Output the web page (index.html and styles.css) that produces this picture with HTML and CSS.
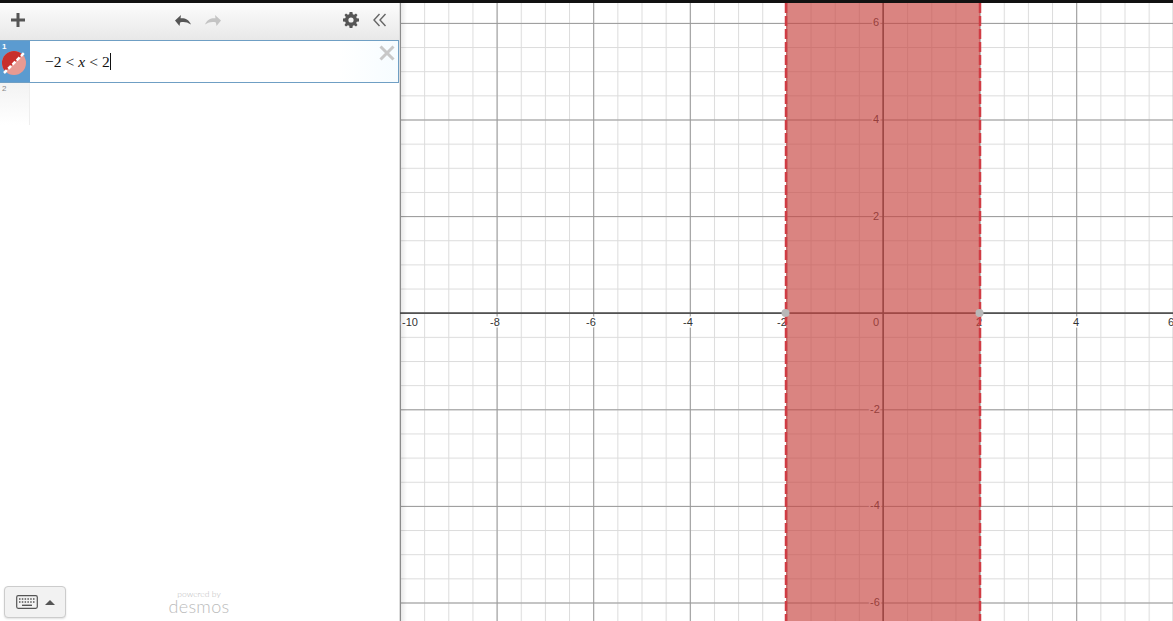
FILE: index.html
```html
<!DOCTYPE html>
<html>
<head>
  <meta charset="UTF-8">
  <title>Desmos graph</title>
  <link rel="stylesheet" href="styles.css">
</head>
<body>
<div class="topline"></div>
<div class="calc">

  <div class="sidebar">
    <div class="header">
      <button class="tool">
        <svg width="16" height="16" viewBox="0 0 16 16"><path d="M6.5 1h3v5.5H15v3H9.500V15h-3V9.500H1v-3h5.500z" fill="#555"/></svg>
      </button>
      <div class="history">
        <svg width="18" height="13" viewBox="0 0 18 13"><path d="M7 1 1 6.500 5.500 12l.6-3.600C9.500 7.500 13 7.800 17 10.500 15 5.500 11 3.800 6.500 4.200z" fill="#555"/></svg>
        <svg width="18" height="13" viewBox="0 0 18 13"><path d="M11 1l6 5.500L12.500 12l-.6-3.600C8.500 7.500 5 7.800 1 10.500 3 5.500 7 3.800 11.500 4.200z" fill="#c4c4c4"/></svg>
      </div>
      <div class="settings">
        <svg width="16" height="16" viewBox="0 0 16 16"><path d="M6.600 0h2.800l.4 2.200 1.300.6L13 1.500l1.500 1.500-1.300 1.900.6 1.300 2.200.4v2.800l-2.200.4-.6 1.300 1.300 1.900-1.500 1.500-1.900-1.300-1.300.6-.4 2.200H6.600l-.4-2.200-1.300-.6L3 14.500 1.500 13l1.300-1.900-.6-1.300L0 9.400V6.600l2.200-.4.600-1.300L1.500 3 3 1.500l1.900 1.300 1.300-.6zM8 5.400a2.600 2.600 0 1 0 0 5.200 2.600 2.600 0 0 0 0-5.200z" fill="#555" fill-rule="evenodd"/></svg>
        <svg width="14" height="14" viewBox="0 0 14 14"><path d="M6.500 1 1 7l5.500 6M12.500 1 7 7l5.500 6" fill="none" stroke="#666" stroke-width="1.400"/></svg>
      </div>
    </div>

    <div class="expr expr-active">
      <div class="expr-tab">
        <span class="expr-num">1</span>
        <svg class="expr-icon" width="26" height="26" viewBox="0 0 26 26">
          <circle cx="13" cy="13" r="12" fill="#e89a92"/>
          <path d="M21.500 4.500A12 12 0 0 0 4.500 21.500z" fill="#c8302c"/>
          <path d="M3 23 23 3" stroke="#fff" stroke-width="2.500" stroke-dasharray="4 2"/>
        </svg>
      </div>
      <div class="math">
        <span>−2</span><span class="rel">&lt;</span><i>x</i><span class="rel">&lt;</span><span>2</span><span class="cursor"></span>
      </div>
      <svg class="expr-close" width="16" height="16" viewBox="0 0 16 16"><path d="M1.500 1.500l13 13M14.500 1.500l-13 13" stroke="#c8c8c8" stroke-width="3"/></svg>
    </div>

    <div class="expr">
      <div class="expr-tab expr-tab-empty"><span class="expr-num">2</span></div>
    </div>

    <div class="footer">
      <button class="keys">
        <svg width="22" height="14" viewBox="0 0 22 14">
          <rect x=".7" y=".7" width="20.600" height="12.600" rx="1.500" fill="none" stroke="#555" stroke-width="1.200"/>
          <path d="M3 4h16M3 7h16" stroke="#555" stroke-width="1.400" stroke-dasharray="1.500 1.300"/>
          <path d="M6 10.300h10" stroke="#555" stroke-width="1.400"/>
        </svg>
        <span class="caret"></span>
      </button>
      <div class="brand">
        <span class="brand-by">powered by</span>
        <span class="brand-name">desmos</span>
      </div>
    </div>
  </div>

  <div class="graph">
    <svg class="plane" width="773" height="618" viewBox="400 3 773 618">
      <defs>
        <pattern id="minor-x" patternUnits="userSpaceOnUse" x="883" y="0" width="24.150" height="10">
          <rect width="1" height="10" fill="#dcdcdc"/>
        </pattern>
        <pattern id="minor-y" patternUnits="userSpaceOnUse" x="0" y="312.700" width="10" height="24.150">
          <rect width="10" height="1" fill="#dcdcdc"/>
        </pattern>
        <pattern id="major-x" patternUnits="userSpaceOnUse" x="883" y="0" width="96.600" height="10">
          <rect width="1" height="10" fill="#999"/>
        </pattern>
        <pattern id="major-y" patternUnits="userSpaceOnUse" x="0" y="312.700" width="10" height="96.600">
          <rect width="10" height="1" fill="#999"/>
        </pattern>
        <linearGradient id="edge-shade">
          <stop offset="0" stop-color="#000" stop-opacity=".1"/>
          <stop offset="1" stop-color="#000" stop-opacity="0"/>
        </linearGradient>
      </defs>

      <rect x="400" y="0" width="773" height="621" fill="#fff"/>
      <rect x="400" y="0" width="773" height="621" fill="url(#minor-x)"/>
      <rect x="400" y="0" width="773" height="621" fill="url(#minor-y)"/>
      <rect x="400" y="0" width="773" height="621" fill="url(#major-x)"/>
      <rect x="400" y="0" width="773" height="621" fill="url(#major-y)"/>
      <rect class="axis" x="400" y="312.300" width="773" height="1.600"/>
      <rect class="axis" x="882.300" y="0" width="1.600" height="621"/>

      <g class="ticks">
        <text x="410" y="326">-10</text>
        <text x="495" y="326">-8</text>
        <text x="591" y="326">-6</text>
        <text x="688" y="326">-4</text>
        <text x="782" y="326">-2</text>
        <text x="876" y="326">0</text>
        <text x="979" y="326">2</text>
        <text x="1076" y="326">4</text>
        <text x="1171" y="326">6</text>
        <text x="876" y="26">6</text>
        <text x="876" y="123">4</text>
        <text x="876" y="220">2</text>
        <text x="875" y="413">-2</text>
        <text x="875" y="509">-4</text>
        <text x="875" y="606">-6</text>
      </g>

      <rect class="region" x="786" y="0" width="194" height="621"/>
      <path class="bound" d="M786 3V621M980 3V621"/>
      <circle class="hole" cx="785.500" cy="313" r="4"/>
      <circle class="hole" cx="979.500" cy="313" r="4"/>
      <rect x="400" y="0" width="7" height="621" fill="url(#edge-shade)"/>
    </svg>
  </div>

</div>
</body>
</html>
```

FILE: styles.css
```css
html, body {
  margin: 0;
  height: 100%;
  overflow: hidden;
  background: #fff;
  font-family: "Liberation Sans", Arial, sans-serif;
}

.topline {
  height: 3px;
  background: #111;
}

.calc {
  display: flex;
  height: 618px;
}

/* left panel */
.sidebar {
  width: 400px;
  flex: none;
  display: flex;
  flex-direction: column;
  box-sizing: border-box;
  border-right: 1px solid #ddd;
}

.header {
  height: 37px;
  flex: none;
  box-sizing: border-box;
  display: grid;
  grid-template-columns: 1fr 1fr 1fr;
  align-items: center;
  padding: 0 12px 3px 10px;
  background: linear-gradient(#fcfcfc, #e8e8e8);
}

.tool {
  padding: 0;
  border: 0;
  background: none;
  display: flex;
}

.history {
  display: flex;
  justify-content: center;
  gap: 12px;
}

.settings {
  display: flex;
  justify-content: flex-end;
  align-items: center;
  gap: 14px;
}

.expr {
  height: 42px;
  flex: none;
  display: flex;
  position: relative;
}

.expr-active {
  height: 43px;
  box-sizing: border-box;
  border: 1px solid #6f9fc4;
  border-left: 0;
  background: linear-gradient(90deg, #fff 85%, #f6fcff);
}

.expr-tab {
  width: 30px;
  flex: none;
  background: #5b9bd0;
  position: relative;
}

.expr-tab-empty {
  background: linear-gradient(#f3f3f3, #fff);
  box-sizing: border-box;
  border-right: 1px solid #eee;
}

.expr-num {
  position: absolute;
  top: 1px;
  left: 2px;
  font-size: 8px;
  color: #888;
}

.expr-active .expr-num {
  color: #fff;
  font-weight: bold;
}

.expr-icon {
  position: absolute;
  left: 1px;
  top: 9px;
}

.math {
  display: flex;
  align-items: center;
  padding-left: 15px;
  font-family: "Liberation Serif", "Times New Roman", serif;
  font-size: 15.500px;
  color: #111;
}

.rel {
  margin: 0 4px;
}

.cursor {
  width: 1px;
  height: 17px;
  background: #111;
}

.expr-close {
  position: absolute;
  right: 3px;
  top: 4px;
}

.footer {
  margin-top: auto;
  display: flex;
  align-items: flex-end;
  padding: 0 0 3px 4px;
}

.keys {
  width: 62px;
  height: 32px;
  padding: 0;
  display: flex;
  align-items: center;
  justify-content: center;
  gap: 7px;
  box-sizing: border-box;
  border: 1px solid #ccc;
  border-radius: 4px;
  background: #f2f2f2;
  box-shadow: 0 1px 2px rgba(0, 0, 0, .12);
}

.caret {
  width: 0;
  height: 0;
  border-left: 5px solid transparent;
  border-right: 5px solid transparent;
  border-bottom: 5px solid #555;
}

.brand {
  margin-left: 102px;
  width: 62px;
  display: flex;
  flex-direction: column;
  align-items: center;
  color: #bbb;
  font-family: Lato, "Open Sans", sans-serif;
  font-weight: 300;
}

.brand-by {
  font-size: 8.500px;
  line-height: 9px;
}

.brand-name {
  font-size: 18px;
  line-height: 15px;
  letter-spacing: .3px;
  margin-bottom: 4px;
}

/* graph paper */
.graph {
  flex: 1;
  overflow: hidden;
}

.plane {
  display: block;
}

.axis {
  fill: #4a4a4a;
}

.ticks text {
  font-family: "Liberation Sans", Arial, sans-serif;
  font-size: 11px;
  fill: #333;
  text-anchor: middle;
  paint-order: stroke;
  stroke: #fff;
  stroke-width: 3px;
}

.region {
  fill: #c74440;
  fill-opacity: .66;
}

.bound {
  fill: none;
  stroke: #d03c44;
  stroke-width: 2.500;
  stroke-dasharray: 10 3;
}

.hole {
  fill: #b8b8b8;
}
```
